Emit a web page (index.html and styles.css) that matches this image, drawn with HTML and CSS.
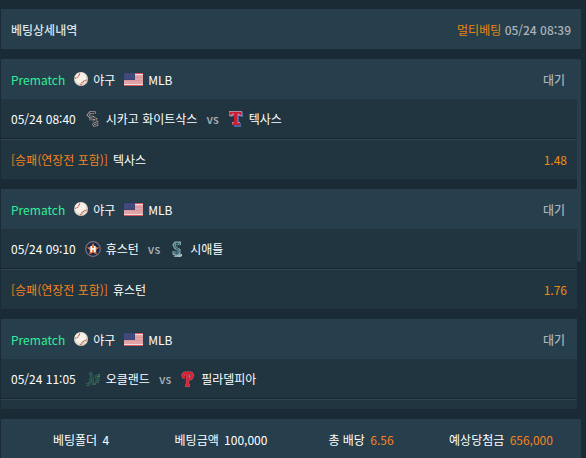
FILE: index.html
```html
<!DOCTYPE html>
<html lang="ko">
<head>
  <meta charset="UTF-8" />
  <meta name="viewport" content="width=device-width, initial-scale=1.0"/>
  <title>베팅상세내역</title>
  <link rel="stylesheet" href="styles.css">
</head>
<body>

<!-- Shared icons -->
<svg class="defs" aria-hidden="true">
  <symbol id="ball" viewBox="0 0 14 14">
    <circle cx="7" cy="7" r="7" fill="#e0dacd"/>
    <circle cx="6.500" cy="6" r="5.500" fill="#f6f2e8"/>
    <path d="M.8 6.500Q5 5.500 6 .6M6.500 13.200Q8.500 8.800 13.300 7.800" fill="none" stroke="#cf5a52" stroke-width="1.200" stroke-dasharray="1.500 .5"/>
  </symbol>
  <symbol id="flag" viewBox="0 0 19 13">
    <path fill="#e0a3a8" d="M0 0h19v13H0z"/>
    <path stroke="#d4545c" d="M0 .5h19M0 12.500h19"/>
    <path stroke="#f0dcdd" d="M0 1.500h19M0 11.500h19"/>
    <path stroke="#d98b92" d="M0 4.500h19M0 7.500h19" stroke-width=".6"/>
    <path fill="#3d4677" d="M0 0h11v7H0z"/>
    <path stroke="#5b648c" stroke-dasharray="1 1" stroke-width=".6" d="M1 2h9M1 4h9"/>
  </symbol>
</svg>

<!-- Title bar -->
<header class="bar">
  <h1 class="title">베팅상세내역</h1>
  <div class="bet-info"><span class="type">멀티베팅</span> <time>05/24 08:39</time></div>
</header>

<!-- Bet list -->
<main class="list-wrap">
  <div class="list">
    <article class="bet">
      <div class="row head">
        <span class="prematch">Prematch</span>
        <span class="item"><svg class="ball"><use href="#ball"/></svg>야구</span>
        <span class="item"><svg class="flag"><use href="#flag"/></svg>MLB</span>
        <span class="state">대기</span>
      </div>
      <div class="row match">
        <time>05/24 08:40</time>
        <span class="item">
          <svg class="team" viewBox="0 0 16 16" fill="none">
            <path d="M9.500 3V1.500H5L3 4l2 2h3v2H4M8 7l3 1v2H8l4 1v3l-3 .5-1-2" stroke="#a39b9b" stroke-width="2.400"/>
            <path d="M9.500 3V1.500H5L3 4l2 2h3v2H4M8 7l3 1v2H8l4 1v3l-3 .5-1-2" stroke="#2c3036" stroke-width="1"/>
          </svg>시카고 화이트삭스</span>
        <span class="vs">vs</span>
        <span class="item">
          <svg class="team" viewBox="0 0 16 16">
            <path fill="#4a679b" d="M2 1h13v5h-2l-1-2h-1v8h2v4H6v-3h1V4L4 6H2z"/>
            <path fill="#b18a9b" d="M1 0h13v5h-3l-1-1v7h2v3H4v-3h2V4L4 5H1z"/>
            <path fill="#cc1b35" d="M1.500 1h12v3H12l-1-1.500H9.500V12H12v2H4.500v-2H6V2.500H4L3 4H1.500z"/>
          </svg>텍사스</span>
      </div>
      <div class="row pick">
        <span class="market">[승패(연장전 포함)]</span>
        <span>텍사스</span>
        <span class="odds">1.48</span>
      </div>
    </article>

    <article class="bet">
      <div class="row head">
        <span class="prematch">Prematch</span>
        <span class="item"><svg class="ball"><use href="#ball"/></svg>야구</span>
        <span class="item"><svg class="flag"><use href="#flag"/></svg>MLB</span>
        <span class="state">대기</span>
      </div>
      <div class="row match">
        <time>05/24 09:10</time>
        <span class="item">
          <svg class="team" viewBox="0 0 16 16">
            <circle cx="8" cy="8" r="7.300" fill="#18294c" stroke="#7f6f7c" stroke-width="1.200"/>
            <path fill="#e9793c" d="M8 2l2 4 4 .5-3 2.800.8 4.200L8 11.500l-3.800 2L5 9.300 2 6.500 6 6z"/>
            <path d="M6.200 5v6M9.800 5v6M6.200 8h3.600" stroke="#fff" stroke-width="1.600"/>
          </svg>휴스턴</span>
        <span class="vs">vs</span>
        <span class="item">
          <svg class="team" viewBox="0 0 16 16" fill="none">
            <path d="M10.500 4V2H6.500L5 4l1.500 3L10 9v3l-3 1.500-2-1V10M5 14.500h7" stroke="#8ba5ad" stroke-width="3"/>
            <path d="M10.500 5V2.500H6.500L5 4l1.500 3L10 9v3l-3 1-2-1v-2M8 1v13" stroke="#2c6470" stroke-width="1"/>
            <path d="M12.500 13v2H8" stroke="#b9c7ca"/>
          </svg>시애틀</span>
      </div>
      <div class="row pick">
        <span class="market">[승패(연장전 포함)]</span>
        <span>휴스턴</span>
        <span class="odds">1.76</span>
      </div>
    </article>

    <article class="bet">
      <div class="row head">
        <span class="prematch">Prematch</span>
        <span class="item"><svg class="ball"><use href="#ball"/></svg>야구</span>
        <span class="item"><svg class="flag"><use href="#flag"/></svg>MLB</span>
        <span class="state">대기</span>
      </div>
      <div class="row match">
        <time>05/24 11:05</time>
        <span class="item">
          <svg class="team" viewBox="0 0 16 16" fill="none">
            <path d="M1 13.500h3L7 3l1 10h3M4 9h5M4 3l3-1M14.500 4l-3 1v2l2 1-1 3-2-1M14 3v3" stroke="#587970" stroke-width="2"/>
            <path d="M1 13.500h3L7 3l1 10h3M4 9h5M4 3l3-1M14.500 4l-3 1v2l2 1-1 3-2-1" stroke="#174c3e" stroke-width="1.200"/>
          </svg>오클랜드</span>
        <span class="vs">vs</span>
        <span class="item">
          <svg class="team" viewBox="0 0 16 16" fill="none" stroke-linejoin="round">
            <path d="M5 6H3.500L3 4l2-2h6l1.500 2-1 3L8 8.500M7.500 2v12M5 14.500h5" stroke="#a9707e" stroke-width="3.200"/>
            <path d="M5 6H3.500L3 4l2-2h6l1.500 2-1 3L8 8.500M7.500 2v12M5 14.500h5" stroke="#e3192e" stroke-width="2.200"/>
            <path d="M9.500 4v2" stroke="#c58b95" stroke-width=".8"/>
          </svg>필라델피아</span>
      </div>
      <div class="row pick"></div>
    </article>
  </div>
  <div class="track"><div class="thumb"></div></div>
</main>

<!-- Totals -->
<footer class="bar totals">
  <div>베팅폴더 <span>4</span></div>
  <div>베팅금액 <span>100,000</span></div>
  <div>총 배당 <span class="point">6.56</span></div>
  <div>예상당첨금 <span class="point">656,000</span></div>
</footer>

</body>
</html>
```
FILE: styles.css
```css
* {
  box-sizing: border-box;
}

body {
  margin: 0;
  padding: 9px 5px 0 1px;
  height: 100vh;
  overflow: hidden;
  background: #1b2b36;
  color: #fff;
  font-family: "Noto Sans CJK KR", sans-serif;
  font-size: 12px;
  line-height: 20px;
}

.defs {
  display: none;
}

/* Bars */
.bar {
  display: flex;
  align-items: center;
  justify-content: space-between;
  height: 40px;
  padding: 2px 10px 0;
  background: #273e4c;
}

.title {
  margin: 0;
  font-size: 12px;
  font-weight: 500;
  color: #dfe3e6;
}

.bet-info {
  color: #a9b2b8;
  font-weight: 500;
}

.type {
  color: #e8860c;
  font-weight: 400;
}

/* List */
.list-wrap {
  display: flex;
  height: calc(100vh - 108px);
  margin: 10px 0;
}

.list {
  flex: 1;
  overflow-y: auto;
  scrollbar-width: none;
}

.track {
  width: 4px;
}

.thumb {
  height: 58%;
  background: #273e4c;
  border-radius: 2px;
}

.bet {
  margin-bottom: 10px;
  background: #213541;
}

.row {
  display: flex;
  align-items: center;
  gap: 9px;
  height: 40px;
  padding: 0 10px;
}

.head {
  padding: 2px 12px 0 10px;
  background: #273e4c;
}

.match {
  border-bottom: 1px solid #18262f;
}

.pick {
  gap: 5px;
  border-top: 1px solid #30454f;
}

.item {
  display: flex;
  align-items: center;
  gap: 5px;
}

.prematch {
  color: #2ff09a;
}

.state {
  margin-left: auto;
  color: #a9b2b8;
  font-weight: 500;
}

.vs {
  color: #a9b2b8;
  font-weight: 500;
}

.market {
  color: #f5821f;
}

.odds {
  margin-left: auto;
  color: #f08a0c;
}

/* Icons */
.ball {
  width: 14px;
  height: 14px;
  margin-bottom: 2px;
}

.flag {
  width: 19px;
  height: 13px;
  margin-bottom: 2px;
}

.team {
  width: 16px;
  height: 16px;
}

/* Totals */
.totals {
  display: grid;
  grid-template-columns: repeat(4, 1fr);
  text-align: center;
}

.totals span {
  margin-left: 2px;
}

.point {
  color: #f5821f;
}
```
